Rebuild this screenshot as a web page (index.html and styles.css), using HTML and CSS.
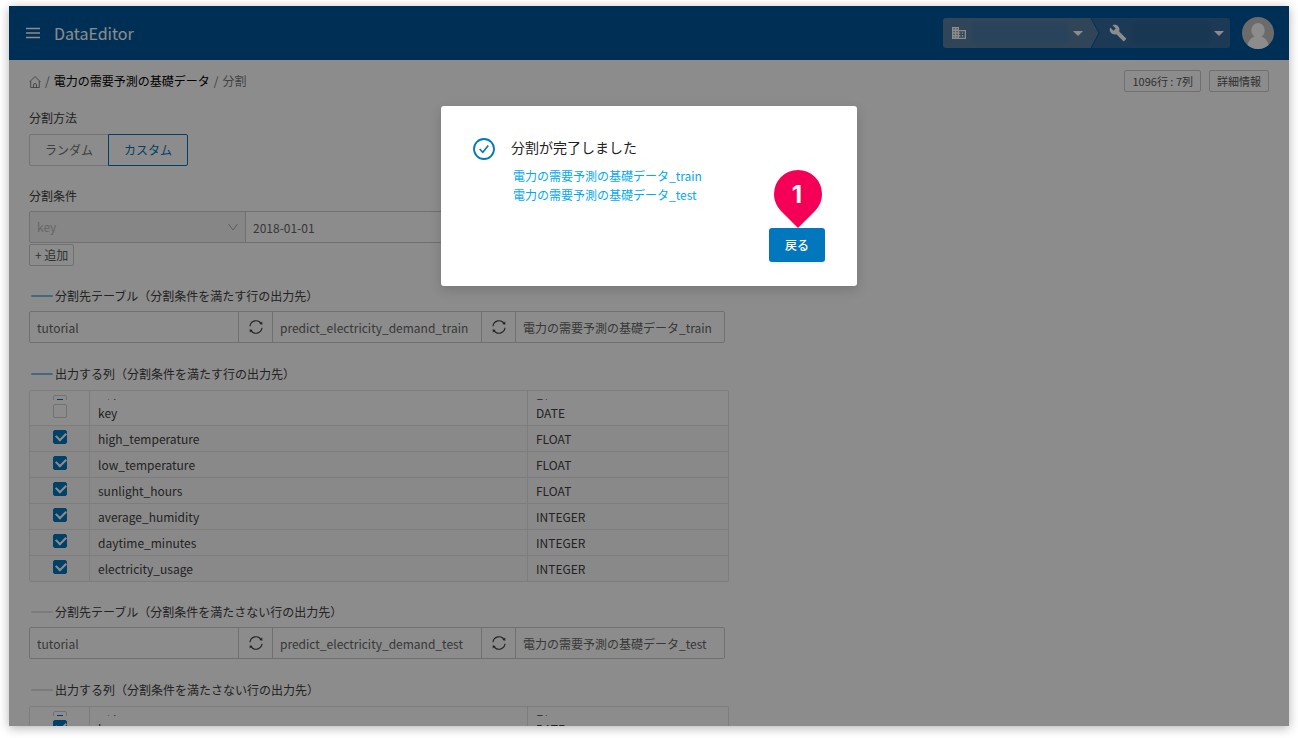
FILE: index.html
```html
<!DOCTYPE html>
<html lang="ja">
<head>
<meta charset="utf-8">
<title>DataEditor</title>
<link rel="stylesheet" href="styles.css">
</head>
<body>
<svg class="defs" aria-hidden="true">
  <symbol id="sync" viewBox="0 0 16 16">
    <path d="M2 7.2A6.1 6.1 0 0 1 13.2 4.6M14 8.8A6.1 6.1 0 0 1 2.8 11.4" fill="none" stroke="currentColor" stroke-width="1.2"/>
    <path d="M14.3 2.6v3.2l-3-.8zM1.700 13.400v-3.200l3 .8z" fill="currentColor"/>
  </symbol>
</svg>
<div class="window">
  <header class="topbar">
    <button class="menu" aria-label="メニュー">
      <svg width="14" height="12" viewBox="0 0 14 12"><path d="M0 1.500h14M0 6h14M0 10.500h14" stroke="currentColor" stroke-width="1.700"/></svg>
    </button>
    <h1 class="brand">DataEditor</h1>
    <div class="switcher">
      <button class="switch org" aria-label="組織">
        <svg width="14" height="14" viewBox="0 0 14 14"><path fill="currentColor" fill-rule="evenodd" d="M0 1h7v3h7v9H0zM1.400 2.300v1.200h1.200V2.300zM4.400 2.300v1.200h1.200V2.300zM1.400 5v1.200h1.200V5zM4.400 5v1.200h1.200V5zM1.400 7.700v1.200h1.200V7.700zM4.400 7.700v1.200h1.200V7.700zM1.400 10.400v1.200h1.200v-1.200zM4.400 10.400v1.200h1.200v-1.200zM7 5.300v1.100h1.400v1.300H7v1.400h1.400v1.300H7v1.400h5.700V5.300zM9.800 6.400h1.400v1.300H9.800zM9.800 9.100h1.400v1.300H9.800z"/></svg>
        <span class="masked"></span>
        <span class="caret"></span>
      </button>
      <svg class="chevron" width="10" height="30" viewBox="0 0 10 30"><path class="chevron-fill" d="M0 0l8 15-8 15z"/><path class="chevron-line" d="M0 0l8 15-8 15"/></svg>
      <button class="switch tool" aria-label="プロジェクト">
        <svg width="18" height="18" viewBox="0 0 24 24"><path fill="currentColor" d="M22.700 19l-9.100-9.100c.9-2.300.4-5-1.500-6.900-2-2-5-2.400-7.400-1.300L9 6 6 9 1.600 4.700C.4 7.100.9 10.100 2.900 12.100c1.900 1.900 4.600 2.400 6.900 1.500l9.100 9.100c.4.4 1 .4 1.400 0l2.300-2.300c.5-.4.5-1.100.1-1.400z"/></svg>
        <span class="masked"></span>
        <span class="caret"></span>
      </button>
    </div>
    <svg class="avatar" width="32" height="32" viewBox="0 0 32 32"><circle cx="16" cy="16" r="16" fill="#c4c4c4"/><path fill="#fff" d="M16 6a6.800 7.300 0 0 0-3.500 13.400C9 20.500 6.500 23.500 5.500 28A16 16 0 0 0 26.500 28c-1-4.500-3.500-7.500-7-8.600A6.800 7.300 0 0 0 16 6z"/></svg>
  </header>
  <main class="content">
    <div class="subbar">
      <nav class="crumbs">
        <a href="#" class="home" aria-label="ホーム"><svg width="12" height="13" viewBox="0 0 12 13"><path d="M.5 7L6 1.500 11.500 7M1.700 6v6.500h8.600V6M4.500 12.500V10a1.500 1.500 0 0 1 3 0v2.500" fill="none" stroke="currentColor" stroke-width=".9"/></svg></a>
        <span>/</span><a href="#" class="current">電力の需要予測の基礎データ</a><span>/</span><span>分割</span>
      </nav>
      <div class="actions">
        <button class="small">1096行 : 7列</button>
        <button class="small">詳細情報</button>
      </div>
    </div>

    <section class="field">
      <h2 class="label">分割方法</h2>
      <div class="segmented">
        <button class="segment">ランダム</button>
        <button class="segment active">カスタム</button>
      </div>
    </section>

    <section class="field">
      <h2 class="label">分割条件</h2>
      <div class="inputs">
        <div class="select-wrap">
          <select class="select" aria-label="列" disabled><option>key</option></select>
          <svg class="down" width="10" height="8" viewBox="0 0 10 8"><path d="M.5 1L5 7l4.500-6" fill="none" stroke="currentColor"/></svg>
        </div>
        <input class="text date" aria-label="値" value="2018-01-01">
      </div>
      <button class="small add">+ 追加</button>
    </section>

    <section class="field">
      <h2 class="label marked">分割先テーブル（分割条件を満たす行の出力先）</h2>
      <div class="inputs">
        <input class="text" aria-label="データセット" value="tutorial">
        <button class="sync" aria-label="更新"><svg width="16" height="16"><use href="#sync"/></svg></button>
        <input class="text" aria-label="テーブルID" value="predict_electricity_demand_train">
        <button class="sync" aria-label="更新"><svg width="16" height="16"><use href="#sync"/></svg></button>
        <input class="text" aria-label="テーブル名" value="電力の需要予測の基礎データ_train">
      </div>
    </section>

    <section class="field">
      <h2 class="label marked">出力する列（分割条件を満たす行の出力先）</h2>
      <div class="grid">
        <table>
          <colgroup><col class="c-check"><col class="c-name"><col></colgroup>
          <thead><tr>
            <th><div class="clip"><input type="checkbox" class="check partial" aria-label="すべて"></div></th>
            <th><div class="clip">列名</div></th>
            <th><div class="clip">型</div></th>
          </tr></thead>
          <tbody>
            <tr><td><input type="checkbox" class="check" aria-label="key"></td><td>key</td><td>DATE</td></tr>
            <tr><td><input type="checkbox" class="check" aria-label="high_temperature" checked></td><td>high_temperature</td><td>FLOAT</td></tr>
            <tr><td><input type="checkbox" class="check" aria-label="low_temperature" checked></td><td>low_temperature</td><td>FLOAT</td></tr>
            <tr><td><input type="checkbox" class="check" aria-label="sunlight_hours" checked></td><td>sunlight_hours</td><td>FLOAT</td></tr>
            <tr><td><input type="checkbox" class="check" aria-label="average_humidity" checked></td><td>average_humidity</td><td>INTEGER</td></tr>
            <tr><td><input type="checkbox" class="check" aria-label="daytime_minutes" checked></td><td>daytime_minutes</td><td>INTEGER</td></tr>
            <tr><td><input type="checkbox" class="check" aria-label="electricity_usage" checked></td><td>electricity_usage</td><td>INTEGER</td></tr>
          </tbody>
        </table>
      </div>
    </section>

    <section class="field">
      <h2 class="label marked pale">分割先テーブル（分割条件を満たさない行の出力先）</h2>
      <div class="inputs">
        <input class="text" aria-label="データセット" value="tutorial">
        <button class="sync" aria-label="更新"><svg width="16" height="16"><use href="#sync"/></svg></button>
        <input class="text" aria-label="テーブルID" value="predict_electricity_demand_test">
        <button class="sync" aria-label="更新"><svg width="16" height="16"><use href="#sync"/></svg></button>
        <input class="text" aria-label="テーブル名" value="電力の需要予測の基礎データ_test">
      </div>
    </section>

    <section class="field">
      <h2 class="label marked pale">出力する列（分割条件を満たさない行の出力先）</h2>
      <div class="grid">
        <table>
          <colgroup><col class="c-check"><col class="c-name"><col></colgroup>
          <thead><tr>
            <th><div class="clip"><input type="checkbox" class="check partial" aria-label="すべて"></div></th>
            <th><div class="clip">列名</div></th>
            <th><div class="clip">型</div></th>
          </tr></thead>
          <tbody>
            <tr><td><input type="checkbox" class="check" aria-label="key" checked></td><td>key</td><td>DATE</td></tr>
          </tbody>
        </table>
      </div>
    </section>
  </main>

  <div class="overlay">
    <div class="dialog" role="dialog" aria-labelledby="dialog-title">
      <svg class="done" width="22" height="22" viewBox="0 0 22 22"><circle cx="11" cy="11" r="10" fill="none" stroke="currentColor" stroke-width="1.800"/><path d="M6.700 11l3.100 3.300 5.500-6.800" fill="none" stroke="currentColor" stroke-width="1.600"/></svg>
      <div class="dialog-body">
        <h2 class="dialog-title" id="dialog-title">分割が完了しました</h2>
        <div class="links">
          <a href="#">電力の需要予測の基礎データ_train</a>
          <a href="#">電力の需要予測の基礎データ_test</a>
        </div>
      </div>
      <div class="dialog-foot">
        <button class="primary">戻る</button>
        <div class="pin">
          <svg width="48" height="58" viewBox="0 0 48 58"><path fill="#f50057" d="M24 0a24 24 0 0 1 24 24c0 7-3 12.500-7 17L24 58 7 41C3 36.500 0 31 0 24A24 24 0 0 1 24 0z"/></svg>
          <span class="pin-number">1</span>
        </div>
      </div>
    </div>
  </div>
</div>
</body>
</html>
```
FILE: styles.css
```css
* { box-sizing: border-box; }

body {
  margin: 0;
  padding: 6px 9px 12px;
  background: #fff;
  color: #404040;
  font: 12px/20px "Noto Sans CJK JP", "Noto Sans", sans-serif;
}

button, input, select { font: inherit; color: inherit; margin: 0; }
button { cursor: pointer; }
h1, h2 { margin: 0; font-weight: 400; }
a { text-decoration: none; }
svg { display: block; }
.defs { position: absolute; width: 0; height: 0; }

.window {
  position: relative;
  height: calc(100vh - 18px);
  overflow: hidden;
  background: #fff;
  box-shadow: 0 2px 10px rgba(0, 0, 0, .3);
}

/* header */
.topbar {
  display: flex;
  align-items: center;
  height: 54px;
  padding: 0 15px 0 17px;
  background: #01579b;
  color: #fff;
}
.menu { padding: 0; border: 0; background: none; }
.brand { margin-left: 14px; font-size: 16px; line-height: 24px; }
.switcher { display: flex; margin-left: auto; margin-right: 12px; }
.switch {
  display: flex;
  align-items: center;
  height: 30px;
  border: 0;
}
.org { width: 148px; padding: 0 8px 0 9px; background: #5a7fa3; border-radius: 3px 0 0 3px; }
.tool { width: 139px; padding: 0 6px 0 18px; background: #34699c; border-radius: 0 3px 3px 0; }
.chevron { position: relative; z-index: 1; margin-right: -10px; }
.chevron-fill { fill: #5a7fa3; }
.chevron-line { fill: none; stroke: #01579b; }
.masked { flex: 1; height: 20px; margin: 0 4px 0 6px; background: #4a7ba6; filter: blur(2px); }
.tool .masked { background: #2d6496; }
.caret { border: 5px solid transparent; border-top-color: #fff; border-bottom: 0; }

/* page */
.content { padding: 10px 20px 0; }
.subbar { display: flex; justify-content: space-between; align-items: center; margin-bottom: 16px; }
.crumbs { display: flex; align-items: center; gap: 4px; color: #777; }
.crumbs a { color: inherit; }
.crumbs .current { color: #000; }
.actions { display: flex; gap: 8px; font-size: 11px; }
.small {
  height: 22px;
  padding: 0 7px;
  border: 1px solid #ccc;
  border-radius: 2px;
  background: #fff;
  line-height: 20px;
  color: #595959;
}
.add { display: block; padding: 0 5px; }

.field { margin-bottom: 20px; }
.label { margin-bottom: 5px; font-size: 12px; line-height: 20px; }
.marked { display: flex; align-items: center; gap: 2px; padding-left: 2px; }
.marked::before { content: ""; width: 22px; height: 2px; border-radius: 1px; background: #7cbfe8; }
.marked.pale::before { background: #e0e0e0; }

.segmented { display: flex; padding-top: 1px; }
.segment {
  height: 32px;
  padding: 0 15px;
  border: 1px solid #d4d4d4;
  border-radius: 2px 0 0 2px;
  background: #fff;
  color: #737373;
}
.segment.active { margin-left: -1px; border-color: #0277bd; border-radius: 0 2px 2px 0; color: #0277bd; }

.inputs { display: flex; padding-bottom: 1px; }
.inputs > * + * { margin-left: -1px; }
.text, .sync, .select { height: 32px; border: 1px solid #ccc; background: #fff; border-radius: 0; }
.text { width: 210px; padding: 0 7px; color: #666; }
.text.date { width: 240px; }
.inputs > :first-child { border-radius: 2px 0 0 2px; }
.inputs > :last-child { border-radius: 0 2px 2px 0; }
.sync { display: grid; place-items: center; width: 35px; padding: 0; color: #444; }
.select-wrap { position: relative; width: 217px; color: #bbb; }
.select { width: 100%; padding: 0 7px; appearance: none; background: #f5f5f5; color: #bbb; opacity: 1; border-radius: 2px 0 0 2px; }
.down { position: absolute; right: 8px; top: 12px; color: #aaa; }

/* column grid */
.grid { width: 700px; margin-top: 6px; border: 1px solid #e4e4e4; border-radius: 2px; }
table { width: 100%; table-layout: fixed; border-collapse: separate; border-spacing: 0; }
.c-check { width: 60px; }
.c-name { width: 438px; }
th, td { padding: 0 8px; font-weight: 400; text-align: left; border-right: 1px solid #e4e4e4; }
th:first-child, td:first-child { text-align: center; }
th:last-child, td:last-child { border-right: 0; }
td { height: 26px; border-bottom: 1px solid #e4e4e4; background: #fafafa; }
tr:first-child td { background: #fff; }
tr:last-child td { height: 25px; border-bottom: 0; }
.clip { height: 9px; overflow: hidden; line-height: 28px; }
.check {
  appearance: none;
  display: block;
  width: 14px;
  height: 14px;
  margin: 0 auto 4px;
  border: 1px solid #d0d0d0;
  border-radius: 2px;
  background: #fff;
}
.clip .check { margin-top: 4px; }
.check:checked { border-color: #0277bd; background: #0277bd; }
.check:checked::before {
  content: "";
  display: block;
  width: 8px;
  height: 5px;
  margin: 2px;
  border: solid #fff;
  border-width: 0 0 2px 2px;
  transform: translateY(-1px) rotate(-45deg);
}
.partial::before { content: ""; display: block; width: 6px; height: 6px; margin: 3px; background: #0277bd; }

/* dialog */
.overlay {
  position: absolute;
  inset: 0;
  z-index: 2;
  display: flex;
  justify-content: center;
  align-items: flex-start;
  padding-top: 100px;
  background: rgba(0, 0, 0, .45);
}
.dialog {
  display: grid;
  grid-template-columns: 22px 1fr;
  column-gap: 16px;
  width: 416px;
  padding: 32px 32px 24px;
  border-radius: 3px;
  background: #fff;
  box-shadow: 0 4px 12px rgba(0, 0, 0, .15);
}
.done { color: #0277bd; }
.dialog-title { font-size: 14px; line-height: 18px; color: #222; }
.links { display: flex; flex-direction: column; padding: 10px 2px 0; line-height: 19px; }
.links a { color: #03a9f4; }
.dialog-foot { position: relative; grid-column: 1 / -1; justify-self: end; margin-top: 24px; }
.primary {
  display: block;
  height: 34px;
  padding: 0 16px;
  border: 0;
  border-radius: 3px;
  background: #0277bd;
  color: #fff;
  font-weight: 500;
  box-shadow: 0 2px 0 rgba(0, 0, 0, .045);
}
.pin { position: absolute; left: 5px; bottom: 34px; width: 48px; }
.pin-number {
  position: absolute;
  inset: 0 2px auto 0;
  font: 700 24px/50px Inter, sans-serif;
  text-align: center;
  color: #fff;
}
```
